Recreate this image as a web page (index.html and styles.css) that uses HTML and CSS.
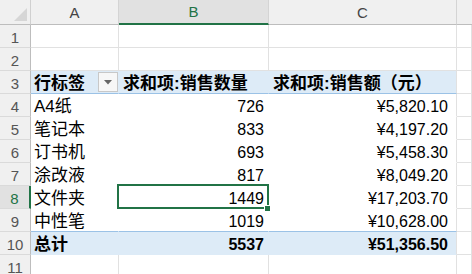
FILE: index.html
```html
<!DOCTYPE html>
<html lang="zh-CN">
<head>
<meta charset="utf-8">
<title>数据透视表</title>
<link rel="stylesheet" href="styles.css">
</head>
<body>
<div class="sheet">
  <div class="corner"><svg class="corner-tri" width="14" height="15" viewBox="0 0 14 15"><polygon points="13,1 13,14 0,14" fill="#d6d6d6"/></svg></div>
  <div class="ch">A</div>
  <div class="ch sel">B</div>
  <div class="ch">C</div>
  <div class="ch last"></div>

  <div class="rh">1</div><div class="c"></div><div class="c"></div><div class="c"></div><div class="c"></div>
  <div class="rh">2</div><div class="c"></div><div class="c"></div><div class="c"></div><div class="c"></div>

  <div class="rh">3</div>
  <div class="c pv hd lbl">行标签<span class="filter"><svg width="8" height="5" viewBox="0 0 8 5"><polygon points="0,0 8,0 4,4.5" fill="#666"/></svg></span></div>
  <div class="c pv hd hl">求和项:销售数量</div>
  <div class="c pv hd hl lc">求和项:销售额（元）</div>
  <div class="c"></div>

  <div class="rh">4</div><div class="c pv lbl">A4纸</div><div class="c pv num">726</div><div class="c pv num amt lc">¥5,820.10</div><div class="c"></div>
  <div class="rh">5</div><div class="c pv lbl">笔记本</div><div class="c pv num">833</div><div class="c pv num amt lc">¥4,197.20</div><div class="c"></div>
  <div class="rh">6</div><div class="c pv lbl">订书机</div><div class="c pv num">693</div><div class="c pv num amt lc">¥5,458.30</div><div class="c"></div>
  <div class="rh">7</div><div class="c pv lbl">涂改液</div><div class="c pv num">817</div><div class="c pv num amt lc">¥8,049.20</div><div class="c"></div>
  <div class="rh sel">8</div><div class="c pv lbl">文件夹</div><div class="c pv num active">1449</div><div class="c pv num amt lc">¥17,203.70</div><div class="c"></div>
  <div class="rh">9</div><div class="c pv lbl pre">中性笔</div><div class="c pv num pre">1019</div><div class="c pv num amt lc pre">¥10,628.00</div><div class="c"></div>
  <div class="rh">10</div><div class="c pv tot lbl">总计</div><div class="c pv tot num">5537</div><div class="c pv tot num amt lc">¥51,356.50</div><div class="c"></div>

  <div class="rh">11</div><div class="c"></div><div class="c"></div><div class="c"></div><div class="c"></div>
</div>
</body>
</html>
```
FILE: styles.css
```css
html, body {
  margin: 0;
  padding: 0;
  background: #ffffff;
  overflow: hidden;
}

.sheet {
  display: grid;
  grid-template-columns: 31px 88px 150px 188px 1fr;
  grid-template-rows: 25px repeat(11, 23px);
  width: 472px;
  font-family: "Liberation Sans", "Noto Sans CJK SC", sans-serif;
  color: #000;
}

.sheet > div {
  box-sizing: border-box;
  border-right: 1px solid #e1e1e1;
  border-bottom: 1px solid #e1e1e1;
  white-space: nowrap;
}

.corner {
  background: #f0f0f0;
  border-right-color: #d0d0d0 !important;
  border-bottom-color: #bdbdbd !important;
  display: flex;
  align-items: flex-end;
  justify-content: flex-end;
  padding: 0 2px 2px 0;
}

.corner-tri {
  display: block;
}

.ch {
  background: #f0f0f0;
  border-right-color: #d4d4d4 !important;
  border-bottom-color: #bdbdbd !important;
  color: #444;
  font-size: 15px;
  display: flex;
  align-items: center;
  justify-content: center;
}

.ch.sel {
  background: #e1e1e1;
  color: #217346;
  border-bottom: 2px solid #217346 !important;
}

.ch.last {
  border-right: none;
}

.rh {
  background: #f0f0f0;
  color: #555;
  font-size: 15px;
  line-height: 22px;
  padding-top: 2px;
  text-align: center;
  border-right-color: #bdbdbd !important;
  border-bottom-color: #dadada !important;
}

.rh.sel {
  background: #e1e1e1;
  color: #217346;
  border-right: 2px solid #217346 !important;
}

.c {
  font-size: 16px;
  line-height: 22px;
  padding: 2px 4px 0 3px;
}

.pv {
  background: #ffffff;
  border-right-color: transparent !important;
  border-bottom-color: transparent !important;
}

.pv.lc {
  border-right-color: #e1e1e1 !important;
}

.lbl {
  font-size: 17px;
  display: flex;
  align-items: flex-start;
}

.num {
  text-align: right;
}

.amt {
  padding-right: 8px;
}

.hd {
  background: #ddebf7;
  border-bottom-color: #9bc2e6 !important;
  font-weight: bold;
  font-size: 17px;
}

.hl {
  padding-left: 4px;
}

.pre {
  border-bottom-color: #9bc2e6 !important;
}

.tot {
  background: #ddebf7;
  font-weight: bold;
  font-size: 17px;
}

.tot.num {
  font-size: 16px;
}

.filter {
  margin-left: auto;
  margin-right: -4px;
  margin-top: -1px;
  width: 20px;
  height: 20px;
  box-sizing: border-box;
  border: 1px solid #c8c8c8;
  background: #f7f7f7;
  display: flex;
  align-items: center;
  justify-content: center;
}

.filter svg {
  display: block;
}

.active {
  position: relative;
}

.active::before {
  content: "";
  position: absolute;
  left: -2px;
  top: -2px;
  width: 152px;
  height: 25px;
  box-sizing: border-box;
  border: 2px solid #217346;
}

.active::after {
  content: "";
  position: absolute;
  left: 145px;
  top: 19px;
  width: 7px;
  height: 7px;
  box-sizing: border-box;
  background: #217346;
  border: 1px solid #ffffff;
}
```
